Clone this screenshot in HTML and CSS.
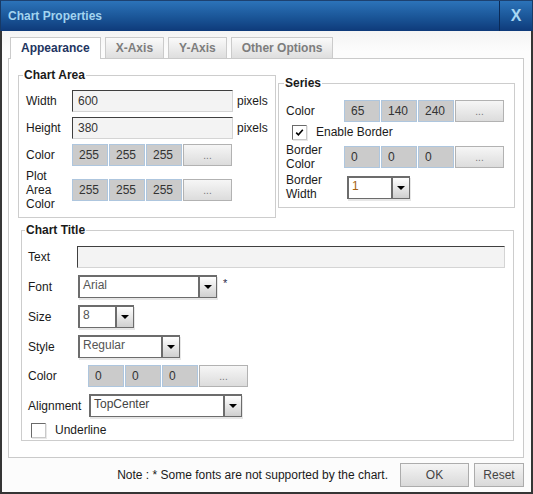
FILE: index.html
```html
<!DOCTYPE html>
<html>
<head>
<meta charset="utf-8">
<title>Chart Properties</title>
<link rel="stylesheet" href="styles.css">
</head>
<body>
<div class="window">
  <div class="titlebar">
    <div class="title">Chart Properties</div>
    <div class="close">X</div>
  </div>
  <div class="body">
    <div class="tabs">
      <div class="tab active">Appearance</div>
      <div class="tab">X-Axis</div>
      <div class="tab">Y-Axis</div>
      <div class="tab">Other Options</div>
    </div>
    <div class="panel">
      <div class="top-row">
        <fieldset class="fs fs-area">
          <legend>Chart Area</legend>
          <div class="rows area-rows">
            <div class="row h22"><span class="lbl w46">Width</span><div class="input w161">600</div><span class="unit">pixels</span></div>
            <div class="row h22 mt5"><span class="lbl w46">Height</span><div class="input w161">380</div><span class="unit">pixels</span></div>
            <div class="row h22 mt5"><span class="lbl w46">Color</span><div class="rgb"><span class="box">255</span><span class="box">255</span><span class="box">255</span><span class="pick">...</span></div></div>
            <div class="row mt3"><span class="lbl w46 multi">Plot<br>Area<br>Color</span><div class="rgb"><span class="box">255</span><span class="box">255</span><span class="box">255</span><span class="pick">...</span></div></div>
          </div>
        </fieldset>
        <fieldset class="fs fs-series">
          <legend>Series</legend>
          <div class="rows series-rows">
            <div class="row h22"><span class="lbl w58">Color</span><div class="rgb"><span class="box">65</span><span class="box">140</span><span class="box">240</span><span class="pick">...</span></div></div>
            <div class="row h16 mt2 check-row"><span class="check checked"><svg width="9" height="9" viewBox="0 0 9 9"><path d="M1.2 4.6 L3.4 6.8 L7.8 1.8" fill="none" stroke="#000" stroke-width="1.6"/></svg></span><span class="check-text">Enable Border</span></div>
            <div class="row mt3"><span class="lbl w58 multi">Border<br>Color</span><div class="rgb"><span class="box">0</span><span class="box">0</span><span class="box">0</span><span class="pick">...</span></div></div>
            <div class="row mt2"><span class="lbl w58 multi">Border<br>Width</span><div class="select w63 ml3"><span class="val orange">1</span><span class="arrow"><i></i></span></div></div>
          </div>
        </fieldset>
      </div>
      <fieldset class="fs fs-title">
        <legend>Chart Title</legend>
        <div class="rows title-rows">
          <div class="row h22"><span class="lbl w49">Text</span><div class="input w428"></div></div>
          <div class="row mt7"><span class="lbl w49">Font</span><div class="select w139 ml1"><span class="val">Arial</span><span class="arrow"><i></i></span></div><span class="star">*</span></div>
          <div class="row mt7"><span class="lbl w49">Size</span><div class="select w56 ml1"><span class="val">8</span><span class="arrow"><i></i></span></div></div>
          <div class="row mt7"><span class="lbl w49">Style</span><div class="select w102 ml1"><span class="val">Regular</span><span class="arrow"><i></i></span></div></div>
          <div class="row h22 mt7"><span class="lbl w60">Color</span><div class="rgb"><span class="box">0</span><span class="box">0</span><span class="box">0</span><span class="pick">...</span></div></div>
          <div class="row mt7"><span class="lbl w61">Alignment</span><div class="select w153"><span class="val dark">TopCenter</span><span class="arrow"><i></i></span></div></div>
          <div class="row h16 mt5 check-row ul-row"><span class="check"></span><span class="check-text">Underline</span></div>
        </div>
      </fieldset>
    </div>
    <div class="footer">
      <span class="note">Note : * Some fonts are not supported by the chart.</span>
      <span class="btn ok">OK</span>
      <span class="btn reset">Reset</span>
    </div>
  </div>
</div>
</body>
</html>
```

FILE: styles.css
```css
html, body {
  margin: 0;
  padding: 0;
  background: #ffffff;
}

body {
  font-family: "Liberation Sans", Arial, sans-serif;
  font-size: 12px;
  color: #1a1a1a;
}

.window {
  width: 533px;
  height: 494px;
  box-sizing: border-box;
  display: flex;
  flex-direction: column;
}

.titlebar {
  height: 31px;
  flex: none;
  display: flex;
  align-items: stretch;
  background: linear-gradient(#2c73b9, #1a5597 55%, #0e3a7a);
  border-top: 1px solid #1d4170;
  box-sizing: border-box;
  border-left: 1px solid #183a66;
  border-right: 1px solid #183a66;
}

.title {
  flex: 1;
  padding-left: 7px;
  display: flex;
  align-items: center;
  font-weight: bold;
  font-size: 12px;
  color: #a2d4f0;
}

.close {
  width: 32px;
  border-left: 1px solid #0a2a57;
  display: flex;
  align-items: center;
  justify-content: center;
  font-weight: bold;
  font-size: 16px;
  color: #a6d6f2;
}

.body {
  flex: 1;
  border: 2px solid #353535;
  border-top: none;
  background: linear-gradient(#f4f4f4, #fcfcfc 20px, #fcfcfc);
  display: flex;
  flex-direction: column;
}

.tabs {
  display: flex;
  align-items: flex-start;
  height: 21px;
  margin: 6px 0 0 8px;
  position: relative;
  z-index: 1;
}

.tab {
  height: 21px;
  box-sizing: border-box;
  padding: 0 10px;
  margin-right: 4px;
  border: 1px solid #cbcbcb;
  border-bottom: none;
  background: linear-gradient(#fafafa, #dedede);
  color: #7d7d7d;
  font-weight: bold;
  font-size: 12px;
  line-height: 20px;
}

.tab.active {
  height: 22px;
  background: #ffffff;
  color: #1e3561;
}

.panel {
  width: 516px;
  height: 400px;
  box-sizing: border-box;
  margin-left: 6px;
  border: 1px solid #cacaca;
  background: #ffffff;
  padding-left: 9px;
}

.top-row {
  display: flex;
  align-items: flex-start;
  margin-top: 9px;
}

.fs {
  margin: 0;
  padding: 0;
  min-width: 0;
  border: 1px solid #cdcdcd;
  box-sizing: border-box;
}

.fs legend {
  padding: 0 1px;
  font-weight: bold;
  font-size: 12px;
  line-height: 14px;
  color: #1a1a1a;
}

.fs-area {
  width: 258px;
  padding: 8px 0 6px 7px;
}

.fs-area legend {
  margin-left: -3px;
}

.fs-series {
  width: 237px;
  margin-left: 2px;
  margin-top: 8px;
  padding: 10px 0 6px 7px;
}

.fs-series legend {
  margin-left: -2px;
}

.fs-title {
  width: 493px;
  margin-left: 3px;
  margin-top: 5px;
  padding: 9px 0 2px 6px;
}

.fs-title legend {
  margin-left: -3px;
}

.rows {
  display: flex;
  flex-direction: column;
}

.row {
  display: flex;
  align-items: center;
}

.h22 { height: 22px; }
.h16 { height: 16px; }
.mt2 { margin-top: 2px; }
.mt3 { margin-top: 3px; }
.mt5 { margin-top: 5px; }
.mt6 { margin-top: 6px; }
.mt7 { margin-top: 7px; }
.ml1 { margin-left: 1px; }
.ml3 { margin-left: 3px; }

.lbl {
  flex: none;
  line-height: 14px;
  color: #1a1a1a;
}

.w46 { width: 46px; }
.w49 { width: 49px; }
.w58 { width: 58px; }
.w60 { width: 60px; }
.w61 { width: 61px; }

.input {
  height: 22px;
  box-sizing: border-box;
  border: 1px solid;
  border-color: #3f3f3f #d4d4d4 #d4d4d4 #3f3f3f;
  background: #f3f3f3;
  padding-left: 5px;
  line-height: 20px;
  color: #333333;
}

.w161 { width: 161px; }
.w428 { width: 428px; }

.unit {
  margin-left: 4px;
  color: #1a1a1a;
}

.rgb {
  display: flex;
  height: 22px;
}

.box {
  width: 36px;
  height: 22px;
  box-sizing: border-box;
  margin-right: 1px;
  border: 1px solid #aec6de;
  background: #cbcbcb;
  padding-left: 6px;
  line-height: 20px;
  color: #333333;
}

.pick {
  width: 49px;
  height: 22px;
  box-sizing: border-box;
  border: 1px solid #b2b2b2;
  background: linear-gradient(#f6f6f6, #dcdcdc);
  text-align: center;
  font-size: 10px;
  line-height: 22px;
  color: #777777;
}

.select {
  height: 23px;
  box-sizing: border-box;
  display: flex;
  align-items: stretch;
  border: 2px solid #6c6c6c;
  border-bottom: 1px solid #6c6c6c;
  border-right-width: 1px;
  background: #ffffff;
  box-shadow: 1px 2px 0 #e6e6e6;
}

.select .val {
  flex: 1;
  padding: 1px 0 0 3px;
  line-height: 14px;
  color: #555555;
}

.select .val.orange {
  color: #a5620f;
}

.select .val.dark {
  color: #444444;
}

.select .arrow {
  width: 16px;
  flex: none;
  border-left: 2px solid #6c6c6c;
  background: linear-gradient(#ffffff, #cfcfcf);
  display: flex;
  align-items: center;
  justify-content: center;
}

.select .arrow i {
  width: 0;
  height: 0;
  border-left: 4px solid transparent;
  border-right: 4px solid transparent;
  border-top: 4px solid #000000;
}

.w56 { width: 56px; }
.w63 { width: 63px; }
.w102 { width: 102px; }
.w139 { width: 139px; }
.w153 { width: 153px; }

.star {
  margin-left: 6px;
  align-self: flex-start;
  margin-top: 2px;
  font-size: 11px;
  color: #2a2a4a;
}

.check-row {
  padding-left: 6px;
}

.ul-row {
  padding-left: 3px;
}

.check {
  width: 15px;
  height: 15px;
  box-sizing: border-box;
  border: 1px solid;
  border-color: #6a6a6a #c9c9c9 #c9c9c9 #6a6a6a;
  background: #ffffff;
  box-shadow: 1px 1px 0 #e8e8e8;
  display: flex;
  align-items: center;
  justify-content: center;
  margin-right: 9px;
}

.check-text {
  color: #1a1a1a;
}

.footer {
  display: flex;
  justify-content: flex-end;
  align-items: center;
  margin-top: 5px;
  padding-right: 7px;
}

.note {
  margin-right: 12px;
  color: #1a1a1a;
}

.btn {
  height: 24px;
  box-sizing: border-box;
  border: 1px solid #acacac;
  background: linear-gradient(#f4f4f4, #d9d9d9);
  text-align: center;
  line-height: 22px;
  color: #444444;
}

.ok { width: 69px; }

.reset {
  width: 50px;
  margin-left: 5px;
}
```
